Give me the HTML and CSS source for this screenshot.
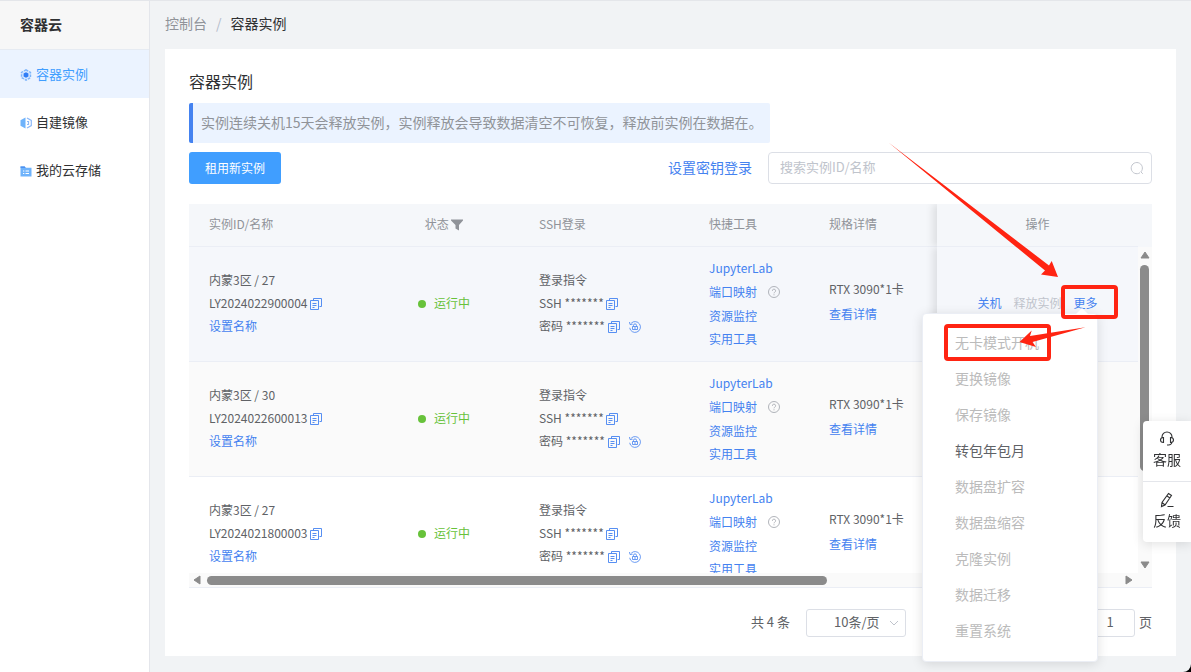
FILE: index.html
```html
<!DOCTYPE html>
<html lang="zh-CN">
<head>
    <meta charset="UTF-8">
    <meta name="viewport" content="width=device-width, initial-scale=1.0">
    <title>容器实例</title>

    <link rel="stylesheet" href="styles.css">
</head>
<body>
    <!-- shared icons -->
    <svg class="sprite" aria-hidden="true">
        <symbol id="icon-copy" viewBox="0 0 12 12">
            <path d="M3.500 2.500V.5h8v8H9.500M.5 2.500h8v9h-8zM2.500 5.500h4M2.500 7.500h4M2.500 9.500h2" fill="none" stroke="currentColor" stroke-width=".9"/>
        </symbol>
        <symbol id="icon-reset" viewBox="0 0 12 12">
            <path d="M2.200 2.200A5.400 5.400 0 1 1 .7 6.800M.5 1l.5 2.500 2.600-.3" fill="none" stroke="currentColor" stroke-width=".8"/>
            <path d="M4.500 5.500V4.400a1.500 1.500 0 0 1 3 0v1.100M3.500 5.500h5v3h-5zM5 7h2" fill="none" stroke="currentColor" stroke-width=".8"/>
        </symbol>
        <symbol id="icon-help" viewBox="0 0 12 12">
            <circle cx="6" cy="6" r="5.500" fill="none" stroke="currentColor" stroke-width=".9"/>
            <path d="M4.400 4.800a1.600 1.600 0 1 1 2.300 1.400Q6 6.600 6 7.300M6 8.300v1" fill="none" stroke="currentColor" stroke-width=".9"/>
        </symbol>
    </svg>

    <aside class="sidebar">
        <h1>容器云</h1>
        <nav>
            <ul>
                <li>
                    <a href="#" class="active">
                        <svg viewBox="0 0 12 12">
                            <path d="M6 .8l4.500 2.600v5.200L6 11.200 1.500 8.600V3.400z" fill="#d5e7ff" stroke="#7db5fb" stroke-width="1.400" stroke-dasharray="2.600 1"/>
                            <path d="M6 3.300l2.400 1.300v2.800L6 8.700 3.600 7.400V4.600z" fill="#2f7df6"/>
                        </svg>
                        容器实例
                    </a>
                </li>
                <li>
                    <a href="#">
                        <svg viewBox="0 0 12 12">
                            <path d="M5.500.5v11L.5 8.700V3.300z" fill="#6fb3fb"/>
                            <path d="M7 1l4.300 2.400v5.200L7 11M7 4.500h1.500v3H7" fill="none" stroke="#8db9f8" stroke-width="1.200"/>
                        </svg>
                        自建镜像
                    </a>
                </li>
                <li>
                    <a href="#">
                        <svg viewBox="0 0 12 12">
                            <path d="M.5 1.500h4.200l1 1.300h5.800v8.700H.5z" fill="#6fb3fb"/>
                            <path d="M.5 1.500h4.200l1 1.300H.5z" fill="#3f86ee"/>
                            <path d="M3 6h1.300M5.500 6H9M3 8.500h1.300M5.500 8.500H9" stroke="#fff"/>
                        </svg>
                        我的云存储
                    </a>
                </li>
            </ul>
        </nav>
    </aside>

    <main>
        <div class="breadcrumb">
            <a href="#">控制台</a>
            <span class="separator">/</span>
            <span>容器实例</span>
        </div>

        <section class="card">
            <h2>容器实例</h2>
            <p class="notice">实例连续关机15天会释放实例，实例释放会导致数据清空不可恢复，释放前实例在数据在。</p>

            <div class="toolbar">
                <button type="button" class="btn-primary">租用新实例</button>
                <a href="#" class="key-link">设置密钥登录</a>
                <div class="search">
                    <input type="text" id="search" aria-label="搜索" placeholder="搜索实例ID/名称">
                    <svg viewBox="0 0 14 14">
                        <path d="M11 10.800a5.600 5.600 0 1 0-1 .9M10.800 10.800l2 2" fill="none" stroke="currentColor"/>
                    </svg>
                </div>
            </div>

            <div class="table-box">
                <div class="table-view">
                    <table>
                        <colgroup>
                            <col class="col-name">
                            <col class="col-status">
                            <col class="col-ssh">
                            <col class="col-tools">
                            <col>
                            <col class="col-action">
                        </colgroup>
                        <thead>
                            <tr>
                                <th>实例ID/名称</th>
                                <th class="center">状态
                                    <svg class="filter" viewBox="0 0 12 12"><path d="M0 .5h12v1L8 6v5.500L4.500 9.500V6L0 1.500z" fill="currentColor"/></svg>
                                </th>
                                <th>SSH登录</th>
                                <th>快捷工具</th>
                                <th>规格详情</th>
                                <th class="fixed center">操作</th>
                            </tr>
                        </thead>
                        <tbody>
                            <tr class="hover">
                                <td>
                                    <div>内蒙3区 / 27</div>
                                    <div>LY2024022900004 <svg class="icon"><use href="#icon-copy"/></svg></div>
                                    <a href="#">设置名称</a>
                                </td>
                                <td class="center"><span class="status">运行中</span></td>
                                <td>
                                    <div>登录指令</div>
                                    <div>SSH ******* <svg class="icon"><use href="#icon-copy"/></svg></div>
                                    <div>密码 ******* <svg class="icon"><use href="#icon-copy"/></svg><svg class="icon reset"><use href="#icon-reset"/></svg></div>
                                </td>
                                <td class="tools">
                                    <a href="#">JupyterLab</a>
                                    <div class="port"><a href="#">端口映射</a><svg class="help"><use href="#icon-help"/></svg></div>
                                    <a href="#">资源监控</a>
                                    <a href="#">实用工具</a>
                                </td>
                                <td class="spec">
                                    <div>RTX 3090*1卡</div>
                                    <a href="#">查看详情</a>
                                </td>
                                <td class="fixed">
                                    <div class="actions">
                                        <button type="button">关机</button>
                                        <button type="button" disabled>释放实例</button>
                                        <button type="button">更多</button>
                                    </div>
                                </td>
                            </tr>
                            <tr class="striped">
                                <td>
                                    <div>内蒙3区 / 30</div>
                                    <div>LY2024022600013 <svg class="icon"><use href="#icon-copy"/></svg></div>
                                    <a href="#">设置名称</a>
                                </td>
                                <td class="center"><span class="status">运行中</span></td>
                                <td>
                                    <div>登录指令</div>
                                    <div>SSH ******* <svg class="icon"><use href="#icon-copy"/></svg></div>
                                    <div>密码 ******* <svg class="icon"><use href="#icon-copy"/></svg><svg class="icon reset"><use href="#icon-reset"/></svg></div>
                                </td>
                                <td class="tools">
                                    <a href="#">JupyterLab</a>
                                    <div class="port"><a href="#">端口映射</a><svg class="help"><use href="#icon-help"/></svg></div>
                                    <a href="#">资源监控</a>
                                    <a href="#">实用工具</a>
                                </td>
                                <td class="spec">
                                    <div>RTX 3090*1卡</div>
                                    <a href="#">查看详情</a>
                                </td>
                                <td class="fixed"></td>
                            </tr>
                            <tr>
                                <td>
                                    <div>内蒙3区 / 27</div>
                                    <div>LY2024021800003 <svg class="icon"><use href="#icon-copy"/></svg></div>
                                    <a href="#">设置名称</a>
                                </td>
                                <td class="center"><span class="status">运行中</span></td>
                                <td>
                                    <div>登录指令</div>
                                    <div>SSH ******* <svg class="icon"><use href="#icon-copy"/></svg></div>
                                    <div>密码 ******* <svg class="icon"><use href="#icon-copy"/></svg><svg class="icon reset"><use href="#icon-reset"/></svg></div>
                                </td>
                                <td class="tools">
                                    <a href="#">JupyterLab</a>
                                    <div class="port"><a href="#">端口映射</a><svg class="help"><use href="#icon-help"/></svg></div>
                                    <a href="#">资源监控</a>
                                    <a href="#">实用工具</a>
                                </td>
                                <td class="spec">
                                    <div>RTX 3090*1卡</div>
                                    <a href="#">查看详情</a>
                                </td>
                                <td class="fixed"></td>
                            </tr>
                        </tbody>
                    </table>
                </div>
                <div class="scroll-y">
                    <svg viewBox="0 0 10 8"><path d="M5 1l4 6H1z"/></svg>
                    <div class="thumb"></div>
                    <svg viewBox="0 0 10 8"><path d="M5 7l4-6H1z"/></svg>
                </div>
                <div class="scroll-x">
                    <svg viewBox="0 0 8 10"><path d="M1 5l6-4v8z"/></svg>
                    <div class="thumb"></div>
                    <svg viewBox="0 0 8 10"><path d="M7 5L1 1v8z"/></svg>
                </div>
            </div>

            <div class="pagination">
                <span>共 4 条</span>
                <div class="page-size">
                    <select aria-label="每页条数">
                        <option>10条/页</option>
                    </select>
                    <svg viewBox="0 0 10 10"><path d="M1 3l4 4 4-4" fill="none" stroke="currentColor"/></svg>
                </div>
                <label class="jumper"><input type="text" value="1"> 页</label>
            </div>

            <!-- dropdown of the "更多" button -->
            <ul class="more-menu">
                <li><button type="button" disabled>无卡模式开机</button></li>
                <li><button type="button" disabled>更换镜像</button></li>
                <li><button type="button" disabled>保存镜像</button></li>
                <li><button type="button">转包年包月</button></li>
                <li><button type="button" disabled>数据盘扩容</button></li>
                <li><button type="button" disabled>数据盘缩容</button></li>
                <li><button type="button" disabled>克隆实例</button></li>
                <li><button type="button" disabled>数据迁移</button></li>
                <li><button type="button" disabled>重置系统</button></li>
            </ul>

            <svg class="marks" viewBox="885 140 240 230">
                <rect x="1063" y="287" width="53" height="30" rx="2"/>
                <rect x="946" y="326" width="103" height="33" rx="2"/>
                <path d="M888.500 142.500L1049 265.500 1051.700 261 1058 277 1041 274.500 1045 270.500z"/>
                <path d="M1085.500 327.300L1030 336 1031.700 330.500 1019.500 342 1036 347 1032.500 342z"/>
            </svg>
        </section>
    </main>

    <div class="service">
        <a href="#">
            <svg viewBox="0 0 16 16">
                <path d="M3 7V6a5 5 0 0 1 10 0v1M13 11q-.5 3-3.500 3M4.500 6.500v5Q1.500 11.500 1.500 9t3-2.500zM11.500 6.500v5q3 0 3-2.500t-3-2.500zM8 14h2" fill="none" stroke="currentColor" stroke-width="1.100"/>
            </svg>
            客服
        </a>
        <a href="#">
            <svg viewBox="0 0 16 16">
                <path d="M9.500 1.500l3 2L6 13l-3.500 1.500L3 10.500zM8 4l3 2M3 10.500L6 13M8.500 14.500h6" fill="none" stroke="currentColor" stroke-width="1.100"/>
            </svg>
            反馈
        </a>
    </div>
</body>
</html>
```
FILE: styles.css
```css
* {
    box-sizing: border-box;
}

html {
    background-color: black;
}

body {
    margin: 0;
    min-height: 100vh;
    display: flex;
    background-color: #f1f3f5;
    border-top: 1px solid #e4e6ea;
    border-bottom-right-radius: 8px;
    font-family: "Noto Sans CJK SC", "Liberation Sans", sans-serif;
    font-size: 14px;
    color: #303133;
}

a {
    color: #4482f0;
    text-decoration: none;
}

button, input, select {
    font-family: inherit;
}

.sprite {
    position: absolute;
    width: 0;
    height: 0;
}

/* sidebar */
.sidebar {
    width: 150px;
    flex-shrink: 0;
    background-color: white;
    border-right: 1px solid #e4e6eb;
}

.sidebar h1 {
    margin: 0;
    padding: 0 0 2px 20px;
    font-size: 14px;
    line-height: 46px;
    background-color: #f7f7f7;
    border-bottom: 1px solid #e6ebf2;
}

.sidebar ul {
    list-style: none;
    margin: 0;
    padding: 0;
}

.sidebar li a {
    display: flex;
    align-items: center;
    gap: 4px;
    height: 48px;
    padding: 0 0 2px 20px;
    font-size: 13px;
    color: #303133;
}

.sidebar li a.active {
    color: #409eff;
    background-color: #ebf3ff;
}

.sidebar li svg {
    width: 12px;
    height: 12px;
    margin-top: 4px;
}

/* main */
main {
    flex: 1;
    min-width: 0;
    padding: 0 15px 16px;
}

.breadcrumb {
    display: flex;
    gap: 9px;
    padding-bottom: 4px;
    line-height: 44px;
}

.breadcrumb a {
    color: #909399;
}

.separator {
    color: #b4bccc;
}

.card {
    position: relative;
    padding: 22px 24px 19px;
    background-color: white;
}

.card h2 {
    margin: 0;
    font-size: 16px;
    font-weight: normal;
    line-height: 20px;
}

.notice {
    width: fit-content;
    margin: 12px 0 9px;
    padding: 0 7px 2px 8px;
    line-height: 38px;
    color: #909399;
    background-color: #ebf3ff;
    border-left: 4px solid #4482f0;
    border-radius: 2px;
}

.toolbar {
    display: flex;
    align-items: center;
    gap: 16px;
    margin-bottom: 20px;
}

.key-link {
    padding-bottom: 2px;
}

.btn-primary {
    height: 32px;
    padding: 0 16px 2px;
    margin-right: auto;
    font-size: 12px;
    color: white;
    background-color: #409eff;
    border: none;
    border-radius: 3px;
    cursor: pointer;
}

.search {
    position: relative;
    width: 384px;
}

.search input {
    display: block;
    width: 100%;
    height: 32px;
    padding: 0 30px 4px 11px;
    font-size: 13px;
    border: 1px solid #dcdfe6;
    border-radius: 4px;
}

.search input::placeholder {
    color: #c0c4cc;
}

.search svg {
    position: absolute;
    top: 9px;
    right: 8px;
    width: 14px;
    height: 14px;
    color: #c0c4cc;
}

/* table */
.table-box {
    display: grid;
    grid-template-columns: 1fr 14px;
    border-bottom: 1px solid #ebeef5;
}

.table-view {
    height: 369px;
    overflow: hidden;
}

table {
    width: 100%;
    table-layout: fixed;
    border-collapse: separate;
    border-spacing: 0;
    font-size: 12px;
    line-height: 23px;
    color: #606266;
}

.col-name {
    width: 180px;
}

.col-status {
    width: 150px;
}

.col-ssh {
    width: 170px;
}

.col-tools {
    width: 120px;
}

.col-action {
    width: 201px;
}

th, td {
    padding: 0 0 4px 20px;
    text-align: left;
    border-bottom: 1px solid #ebeef5;
}

th {
    height: 43px;
    font-weight: normal;
    color: #909399;
    background-color: #f5f7fa;
}

td {
    height: 115px;
}

td a {
    display: block;
}

.center {
    padding-left: 0;
    text-align: center;
}

.hover {
    background-color: #f5f7fb;
}

.striped {
    background-color: #fafafa;
}

.fixed {
    padding-left: 0;
    box-shadow: -4px 0 8px rgba(0, 0, 0, 0.1);
    clip-path: inset(0 0 0 -12px);
    background-color: white;
}

th.fixed {
    background-color: #f5f7fa;
}

.hover .fixed {
    background-color: #f5f7fb;
}

.striped .fixed {
    background-color: #fafafa;
}

.filter {
    width: 12px;
    height: 12px;
    vertical-align: -2px;
}

.icon {
    width: 12px;
    height: 12px;
    color: #4482f0;
    vertical-align: -2px;
}

.reset {
    margin-left: 9px;
}

.status {
    color: #67c23a;
}

.status::before {
    content: "";
    display: inline-block;
    width: 8px;
    height: 8px;
    margin-right: 8px;
    border-radius: 50%;
    background-color: #67c23a;
}

.tools {
    padding-bottom: 2px;
}

.port {
    display: flex;
    align-items: center;
    gap: 11px;
    line-height: 25px;
}

.help {
    width: 12px;
    height: 12px;
    color: #a8abb2;
}

.spec {
    padding-bottom: 6px;
    line-height: 25px;
}

.actions {
    display: flex;
    justify-content: center;
    gap: 12px;
}

.actions button {
    padding: 0;
    font-size: 12px;
    color: #4482f0;
    background: none;
    border: none;
}

.actions button:disabled {
    color: #c0c4cc;
}

/* scrollbars */
.scroll-y, .scroll-x {
    display: flex;
    background-color: #fafafa;
}

.scroll-y svg, .scroll-x svg {
    flex-shrink: 0;
    fill: #8b8b8b;
    stroke: #8b8b8b;
    stroke-linejoin: round;
}

.scroll-y {
    flex-direction: column;
    align-items: center;
    justify-content: space-between;
    padding: 4px 1px 4px 0;
    border-top: 43px solid #f5f7fa;
}

.scroll-y svg {
    width: 10px;
    height: 8px;
}

.scroll-y .thumb {
    width: 9px;
    height: 206px;
    margin: 6px 0 auto;
}

.scroll-x {
    grid-column: 1 / -1;
    align-items: center;
    height: 14px;
    padding: 0 19px 0 4px;
    gap: 6px;
}

.scroll-x svg {
    width: 8px;
    height: 10px;
}

.scroll-x .thumb {
    width: 66%;
    height: 9px;
    margin-right: auto;
}

.thumb {
    border-radius: 5px;
    background-color: #8b8b8b;
}

/* pagination */
.pagination {
    display: flex;
    align-items: center;
    justify-content: flex-end;
    margin-top: 21px;
    font-size: 13px;
    color: #606266;
}

.pagination span {
    padding-bottom: 3px;
}

.page-size {
    position: relative;
    width: 100px;
    margin: 0 179px 0 16px;
}

.page-size select {
    display: block;
    width: 100%;
    height: 28px;
    padding: 0 0 3px 27px;
    font-size: 13px;
    color: #606266;
    background-color: white;
    border: 1px solid #dcdfe6;
    border-radius: 3px;
    appearance: none;
}

.page-size svg {
    position: absolute;
    top: 9px;
    right: 7px;
    width: 10px;
    height: 10px;
    color: #c0c4cc;
}

.jumper {
    display: flex;
    gap: 4px;
    line-height: 25px;
}

.jumper input {
    width: 50px;
    height: 28px;
    padding: 0 0 3px;
    font-size: 13px;
    text-align: center;
    color: #606266;
    border: 1px solid #dcdfe6;
    border-radius: 3px;
}

/* dropdown */
.more-menu {
    position: absolute;
    top: 264px;
    right: 78px;
    width: 176px;
    margin: 0;
    padding: 10px 0 13px;
    list-style: none;
    background-color: white;
    border: 1px solid #ebeef5;
    border-radius: 4px;
    box-shadow: 0 2px 12px rgba(0, 0, 0, 0.12);
}

.more-menu::before {
    content: "";
    position: absolute;
    top: -6px;
    right: 9px;
    border: 6px solid transparent;
    border-top: none;
    border-bottom-color: white;
}

.more-menu button {
    display: block;
    width: 100%;
    padding: 0 32px;
    font-size: 14px;
    line-height: 36px;
    text-align: left;
    color: #606266;
    background: none;
    border: none;
}

.more-menu button:disabled {
    color: #bbb;
}

/* red marks over the table */
.marks {
    position: absolute;
    top: 91px;
    right: 51px;
    width: 240px;
    height: 230px;
    pointer-events: none;
}

.marks rect {
    fill: none;
    stroke: #ff2412;
    stroke-width: 4px;
}

.marks path {
    fill: #ff2412;
}

/* customer service */
.service {
    position: fixed;
    top: 421px;
    right: 0;
    width: 48px;
    background-color: white;
    border-radius: 4px 0 0 4px;
    box-shadow: 0 2px 12px rgba(0, 0, 0, 0.12);
}

.service a {
    display: flex;
    flex-direction: column;
    align-items: center;
    gap: 2px;
    height: 60px;
    padding-top: 10px;
    line-height: 20px;
    color: #303133;
}

.service a + a {
    height: 61px;
    border-top: 1px solid #e4e6eb;
}

.service svg {
    width: 16px;
    height: 16px;
}
```
